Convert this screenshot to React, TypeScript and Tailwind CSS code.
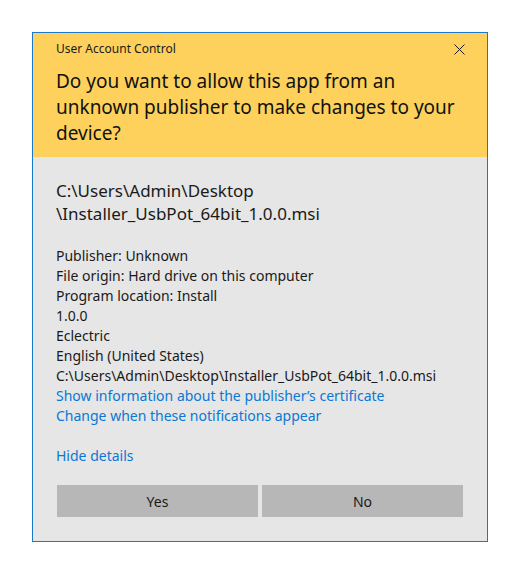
export default function App() {
  const details = [
    "Publisher: Unknown",
    "File origin: Hard drive on this computer",
    "Program location: Install",
    "1.0.0",
    "Eclectric",
    "English (United States)",
    "C:\\Users\\Admin\\Desktop\\Installer_UsbPot_64bit_1.0.0.msi",
  ];

  return (
    <div
      className="min-h-[574px] w-[520px] bg-white pl-[32px] pt-[32px]"
      style={{ fontFamily: '"Noto Sans", "Open Sans", sans-serif' }}
    >
      <div className="flex h-[510px] w-[456px] flex-col border border-[#1979ca] bg-[#e6e6e6]">
        <div className="h-[124px] bg-[#fdd15c] px-[23px] pt-[8px]">
          <div className="flex h-[16px] items-center justify-between">
            <span className="text-[12px] leading-[16px] text-[#1a1a1a]">User Account Control</span>
            <svg width="11" height="11" viewBox="0 0 11 11" className="mr-[-1px]">
              <path d="M0.5 0.5 L10.5 10.5 M10.5 0.5 L0.5 10.5" stroke="#1a1a1a" strokeWidth="1" />
            </svg>
          </div>
          <p className="mt-[11px] text-[19px] leading-[26px] text-[#111]">
            Do you want to allow this app from an unknown publisher to make changes to your device?
          </p>
        </div>

        <div className="flex flex-1 flex-col px-[23px] pt-[22px]">
          <div className="text-[17px] leading-[23px] text-[#1a1a1a]">
            <div>C:\Users\Admin\Desktop</div>
            <div>\Installer_UsbPot_64bit_1.0.0.msi</div>
          </div>

          <div className="mt-[21px] text-[14px] leading-[20px] text-[#1a1a1a]">
            {details.map((d) => (
              <div key={d}>{d}</div>
            ))}
            <div className="text-[#0a78d4]">Show information about the publisher’s certificate</div>
            <div className="text-[#0a78d4]">Change when these notifications appear</div>
          </div>

          <div className="mt-[20px] text-[14px] leading-[20px] text-[#0a78d4]">Hide details</div>

          <div className="ml-[1px] mt-[19px] flex gap-[4px]">
            <button className="h-[32px] w-[201px] bg-[#b7b7b7] text-[14px] text-[#1a1a1a]">Yes</button>
            <button className="h-[32px] w-[201px] bg-[#b7b7b7] text-[14px] text-[#1a1a1a]">No</button>
          </div>
        </div>
      </div>
    </div>
  );
}
